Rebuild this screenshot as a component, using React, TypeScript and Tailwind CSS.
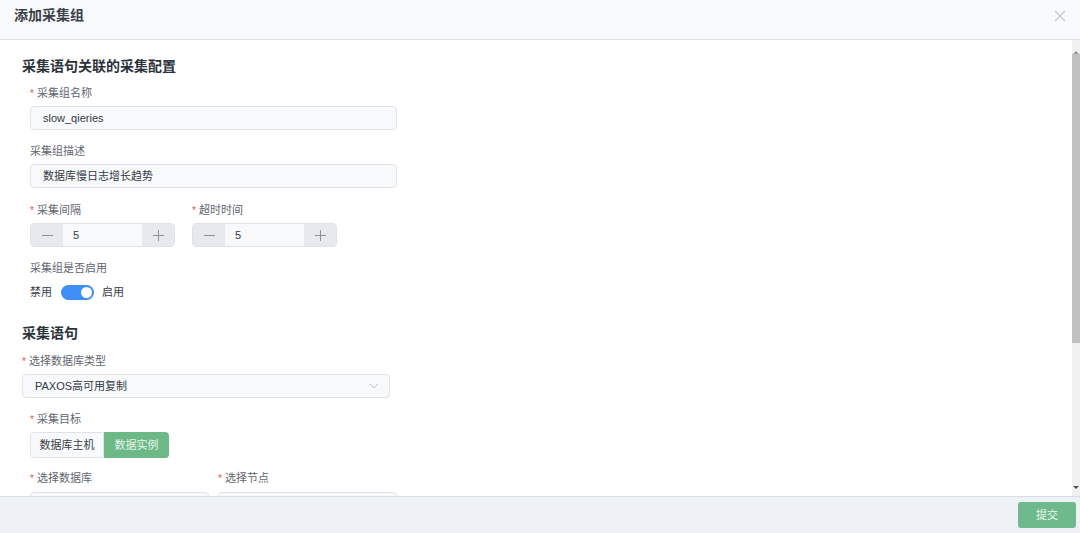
import type React from "react";

const font = { fontFamily: '"Liberation Sans", "Noto Sans CJK SC", sans-serif' };

const Label: React.FC<{ text: string; required?: boolean; className?: string }> = ({
  text,
  required,
  className = "",
}) => (
  <div className={`flex items-center h-[16px] text-[11px] text-[#5f6670] ${className}`}>
    {required && <span className="text-[#e0584f] mr-[3px] text-[10px]">*</span>}
    <span>{text}</span>
  </div>
);

const TextInput: React.FC<{ value?: string; className?: string }> = ({ value, className = "" }) => (
  <div
    className={`h-[24px] rounded-[4px] border border-[#dfe3e8] bg-[#f7f9fb] px-[12px] flex items-center text-[11px] text-[#333a44] ${className}`}
  >
    {value}
  </div>
);

const NumberInput: React.FC<{ value: string }> = ({ value }) => (
  <div className="flex h-[24px] w-[145px] rounded-[4px] border border-[#dfe3e8] overflow-hidden">
    <div className="w-[32px] bg-[#e6e9ee] flex items-center justify-center">
      <svg width="11" height="11" viewBox="0 0 11 11">
        <path d="M0 5.5H11" stroke="#8a919a" strokeWidth="1" />
      </svg>
    </div>
    <div className="flex-1 bg-[#f7f9fb] flex items-center px-[10px] text-[11px] text-[#333a44]">
      {value}
    </div>
    <div className="w-[32px] bg-[#e6e9ee] flex items-center justify-center">
      <svg width="11" height="11" viewBox="0 0 11 11">
        <path d="M0 5.5H11M5.5 0V11" stroke="#8a919a" strokeWidth="1" />
      </svg>
    </div>
  </div>
);

export default function App() {
  return (
    <div className="w-[1080px] h-[533px] flex flex-col bg-white overflow-hidden" style={font}>
      {/* header */}
      <div className="h-[40px] shrink-0 bg-[#f8f9fb] border-b border-[#dde1e6] flex items-center justify-between pl-[14px] pr-[14px]">
        <span className="text-[14px] font-semibold text-[#3a4048] -mt-[9px]">添加采集组</span>
        <svg width="12" height="12" viewBox="0 0 12 12" className="-mt-[8px]">
          <path d="M1 1L11 11M11 1L1 11" stroke="#c3c8ce" strokeWidth="1.2" />
        </svg>
      </div>

      {/* body */}
      <div className="flex-1 flex min-h-0">
        <div className="flex-1 overflow-hidden pt-[16px] pl-[22px]">
          <div className="text-[14px] font-bold text-[#2c323a] h-[20px] leading-[20px]">
            采集语句关联的采集配置
          </div>

          <div className="pl-[8px] w-[375px]">
            <Label text="采集组名称" required className="mt-[9px]" />
            <TextInput value="slow_qieries" className="mt-[5px] w-[367px]" />

            <Label text="采集组描述" className="mt-[13px]" />
            <TextInput value="数据库慢日志增长趋势" className="mt-[5px] w-[367px]" />

            <div className="flex gap-[17px] mt-[14px]">
              <div>
                <Label text="采集间隔" required />
                <div className="mt-[5px]">
                  <NumberInput value="5" />
                </div>
              </div>
              <div>
                <Label text="超时时间" required />
                <div className="mt-[5px]">
                  <NumberInput value="5" />
                </div>
              </div>
            </div>

            <Label text="采集组是否启用" className="mt-[13px]" />
            <div className="flex items-center mt-[8px] h-[16px] text-[11px] text-[#3a4048]">
              <span>禁用</span>
              <div className="ml-[9px] w-[33px] h-[15px] rounded-full bg-[#3f8ff6] relative">
                <div className="absolute right-[2px] top-[2px] w-[11px] h-[11px] rounded-full bg-white" />
              </div>
              <span className="ml-[8px]">启用</span>
            </div>
          </div>

          <div className="text-[14px] font-bold text-[#2c323a] h-[20px] leading-[20px] mt-[23px]">
            采集语句
          </div>
          <Label text="选择数据库类型" required className="mt-[10px]" />
          <div className="mt-[5px] w-[368px] h-[24px] rounded-[4px] border border-[#dfe3e8] bg-[#f7f9fb] pl-[12px] pr-[10px] flex items-center justify-between text-[11px] text-[#333a44]">
            <span>PAXOS高可用复制</span>
            <svg width="10" height="6" viewBox="0 0 10 6">
              <path d="M1 1L5 5L9 1" fill="none" stroke="#b8bec6" strokeWidth="1" />
            </svg>
          </div>

          <div className="pl-[8px]">
            <Label text="采集目标" required className="mt-[13px]" />
            <div className="flex mt-[5px] h-[26px] text-[11px]">
              <div className="w-[74px] rounded-l-[4px] border border-[#dfe3e8] bg-[#f7f9fb] flex items-center justify-center text-[#3a4048]">
                数据库主机
              </div>
              <div className="w-[65px] rounded-r-[4px] bg-[#6cb987] flex items-center justify-center text-[#e8f5ec]">
                数据实例
              </div>
            </div>

            <div className="flex gap-[9px] mt-[12px]">
              <div>
                <Label text="选择数据库" required />
                <TextInput className="mt-[6px] w-[179px]" />
              </div>
              <div>
                <Label text="选择节点" required />
                <TextInput className="mt-[6px] w-[179px]" />
              </div>
            </div>
          </div>
        </div>

        {/* scrollbar */}
        <div className="w-[8px] shrink-0 bg-[#f0f0f0] flex flex-col items-center">
          <svg width="6" height="4" viewBox="0 0 6 4" className="mt-[10px]">
            <path d="M0 4L3 1L6 4Z" fill="#9a9a9a" />
          </svg>
          <div className="w-[8px] h-[289px] bg-[#c1c1c1]" />
          <div className="flex-1" />
          <svg width="6" height="4" viewBox="0 0 6 4" className="mb-[6px]">
            <path d="M0 0L6 0L3 3Z" fill="#505050" />
          </svg>
        </div>
      </div>

      {/* footer */}
      <div className="h-[37px] shrink-0 bg-[#eef2f6] border-t border-[#d7dde4] flex items-center justify-end pr-[4px]">
        <div className="w-[58px] h-[26px] rounded-[3px] bg-[#6fba8c] flex items-center justify-center text-[11px] text-[#eaf6ee]">
          提交
        </div>
      </div>
    </div>
  );
}
